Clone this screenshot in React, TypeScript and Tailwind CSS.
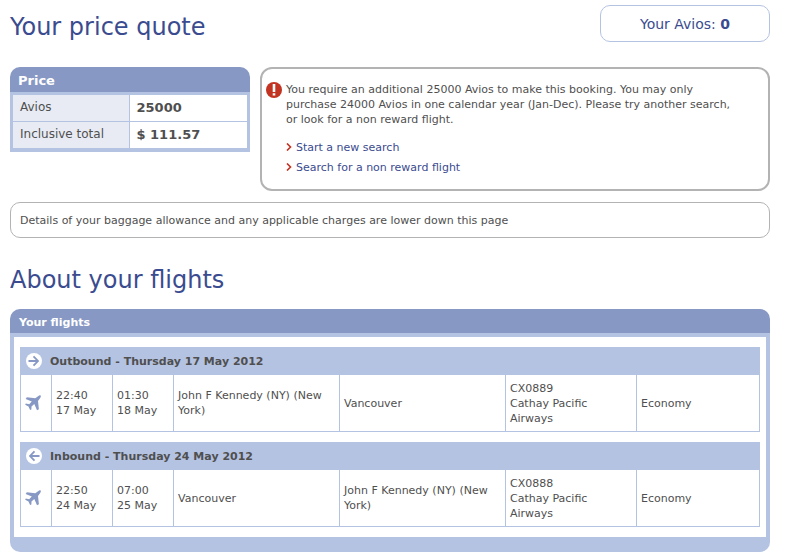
interface Leg {
	direction: "outbound" | "inbound";
	title: string;
	departs: [string, string];
	arrives: [string, string];
	from: string;
	to: string;
	flight: string;
	airline: string;
	cabin: string;
}

const prices = [
	{ label: "Avios", value: "25000" },
	{ label: "Inclusive total", value: "$ 111.57" },
];

const alertLinks = ["Start a new search", "Search for a non reward flight"];

const legs: Leg[] = [
	{
		direction: "outbound",
		title: "Outbound - Thursday 17 May 2012",
		departs: ["22:40", "17 May"],
		arrives: ["01:30", "18 May"],
		from: "John F Kennedy (NY) (New York)",
		to: "Vancouver",
		flight: "CX0889",
		airline: "Cathay Pacific Airways",
		cabin: "Economy",
	},
	{
		direction: "inbound",
		title: "Inbound - Thursday 24 May 2012",
		departs: ["22:50", "24 May"],
		arrives: ["07:00", "25 May"],
		from: "Vancouver",
		to: "John F Kennedy (NY) (New York)",
		flight: "CX0888",
		airline: "Cathay Pacific Airways",
		cabin: "Economy",
	},
];

function PlaneIcon() {
	return (
		<svg
			viewBox="0 0 16 16"
			className="block w-4 h-4 fill-[#8698c3]"
			aria-hidden="true"
		>
			<path d="M15.600.6c-.6-.5-1.500-.2-2.200.3L10.300 3.200 1.800 2.300.7 3.900l6.100 2.500L4.200 9.200.8 8.600.2 9.800l3.300 1.600 1.600 3.700 1.300-.5.100-3.200 2.800-2.400 2.700 6.200 1.900-1-.9-8.300 2.200-2.900c.6-.8.9-1.900.4-2.400z" />
		</svg>
	);
}

function AlertIcon() {
	return (
		<svg
			viewBox="0 0 16 16"
			className="block w-4 h-4 shrink-0"
			aria-hidden="true"
		>
			<circle cx="8" cy="8" r="8" fill="#c23321" />
			<path d="M6.700 2h2.600v8H6.700zM6.700 11.200h2.600v2.300H6.700z" fill="#fff" />
		</svg>
	);
}

function DirectionIcon({ direction }: { direction: Leg["direction"] }) {
	return (
		<svg
			viewBox="0 0 16 16"
			className="block w-4 h-4 shrink-0"
			aria-hidden="true"
		>
			<circle cx="8" cy="8" r="8" fill="#fff" />
			<path
				d={
					direction === "outbound"
						? "M2.500 8h9M7.500 3.300 12 8 7.500 12.700"
						: "M13.500 8h-9M8.500 3.300 4 8 8.500 12.700"
				}
				fill="none"
				stroke="#8698c3"
				strokeWidth="1.800"
			/>
		</svg>
	);
}

function PriceTable() {
	return (
		<section className="w-60 shrink-0 rounded-t-[10px] overflow-hidden">
			<h2 className="h-[25px] px-2 bg-[#8698c3] text-white text-[13px] leading-[27px] font-bold">
				Price
			</h2>
			<div className="border-3 border-b-4 border-[#b5c3e3]">
				<table className="w-full table-fixed border-collapse text-[12px]">
					<tbody>
						{prices.map((price) => (
							<tr
								key={price.label}
								className="h-[26px] border-b border-[#b5c3e3] last:h-[27px] last:border-b-0"
							>
								<th
									scope="row"
									className="w-[116px] px-[7px] bg-[#e8ebf4] border-r border-[#b5c3e3] text-left font-normal align-middle"
								>
									{price.label}
								</th>
								<td className="px-[7px] text-[13px] font-bold">
									{price.value}
								</td>
							</tr>
						))}
					</tbody>
				</table>
			</div>
		</section>
	);
}

function BookingAlert() {
	return (
		<section className="flex-1 flex items-start gap-1 px-1 pt-[13px] pb-3 border-2 border-[#b3b3b3] rounded-xl">
			<AlertIcon />
			<div className="pr-6">
				<p>
					You require an additional 25000 Avios to make this booking. You may
					only purchase 24000 Avios in one calendar year (Jan-Dec). Please try
					another search, or look for a non reward flight.
				</p>
				<ul className="mt-[10px]">
					{alertLinks.map((link) => (
						<li key={link} className="flex items-center h-5 gap-1">
							<svg
								viewBox="0 0 6 8"
								className="block w-[6px] h-2"
								aria-hidden="true"
							>
								<path
									d="M1 .5 4.500 4 1 7.500"
									fill="none"
									stroke="#c23321"
									strokeWidth="1.600"
								/>
							</svg>
							<a href="#" className="text-[#3b4b8f]">
								{link}
							</a>
						</li>
					))}
				</ul>
			</div>
		</section>
	);
}

function FlightLeg({ leg }: { leg: Leg }) {
	return (
		<table className="w-full table-fixed border-collapse">
			<colgroup>
				<col className="w-[31px]" />
				<col className="w-[61px]" />
				<col className="w-[61px]" />
				<col />
				<col />
				<col className="w-[131px]" />
				<col className="w-[123px]" />
			</colgroup>
			<thead>
				<tr className="h-[27px] bg-[#b5c3e3]">
					<th
						colSpan={7}
						className="pl-[5px] border border-[#b5c3e3] text-left font-bold"
					>
						<div className="flex items-center gap-2">
							<DirectionIcon direction={leg.direction} />
							{leg.title}
						</div>
					</th>
				</tr>
			</thead>
			<tbody>
				<tr className="h-[57px] [&>td]:border [&>td]:border-[#b5c3e3] [&>td]:px-1">
					<td>
						<PlaneIcon />
					</td>
					<td>
						{leg.departs[0]}
						<br />
						{leg.departs[1]}
					</td>
					<td>
						{leg.arrives[0]}
						<br />
						{leg.arrives[1]}
					</td>
					<td>{leg.from}</td>
					<td>{leg.to}</td>
					<td>
						{leg.flight}
						<br />
						{leg.airline}
					</td>
					<td>{leg.cabin}</td>
				</tr>
			</tbody>
		</table>
	);
}

export default function App() {
	return (
		<main className="pl-[10px] pr-[19px] pt-[5px] pb-1 bg-white text-[#4f4f4f] text-[11px] leading-[15px] font-['DejaVu_Sans',sans-serif]">
			{/* Page heading */}
			<header className="flex items-start justify-between">
				<h1 className="pt-[7px] text-[24px] leading-[30px] text-[#3b4b8f]">
					Your price quote
				</h1>
				<p className="w-[170px] h-[37px] border border-[#b5c3e3] rounded-[10px] text-center text-[14px] leading-9 text-[#3b4b8f]">
					Your Avios: <strong>0</strong>
				</p>
			</header>

			{/* Price and alert */}
			<div className="flex items-start gap-[10px] mt-[25px]">
				<PriceTable />
				<BookingAlert />
			</div>

			<p className="flex items-center min-h-9 mt-[11px] px-[9px] border border-[#b3b3b3] rounded-[10px]">
				Details of your baggage allowance and any applicable charges are lower
				down this page
			</p>

			{/* Flights */}
			<h2 className="mt-[26px] text-[24px] leading-8 text-[#3b4b8f]">
				About your flights
			</h2>
			<section className="mt-[13px] rounded-[10px] overflow-hidden">
				<h3 className="h-6 px-[9px] bg-[#8698c3] text-white leading-[27px] font-bold">
					Your flights
				</h3>
				<div className="flex flex-col gap-[10px] px-[6px] py-[10px] border-4 border-b-15 border-[#b5c3e3]">
					{legs.map((leg) => (
						<FlightLeg key={leg.direction} leg={leg} />
					))}
				</div>
			</section>
		</main>
	);
}
